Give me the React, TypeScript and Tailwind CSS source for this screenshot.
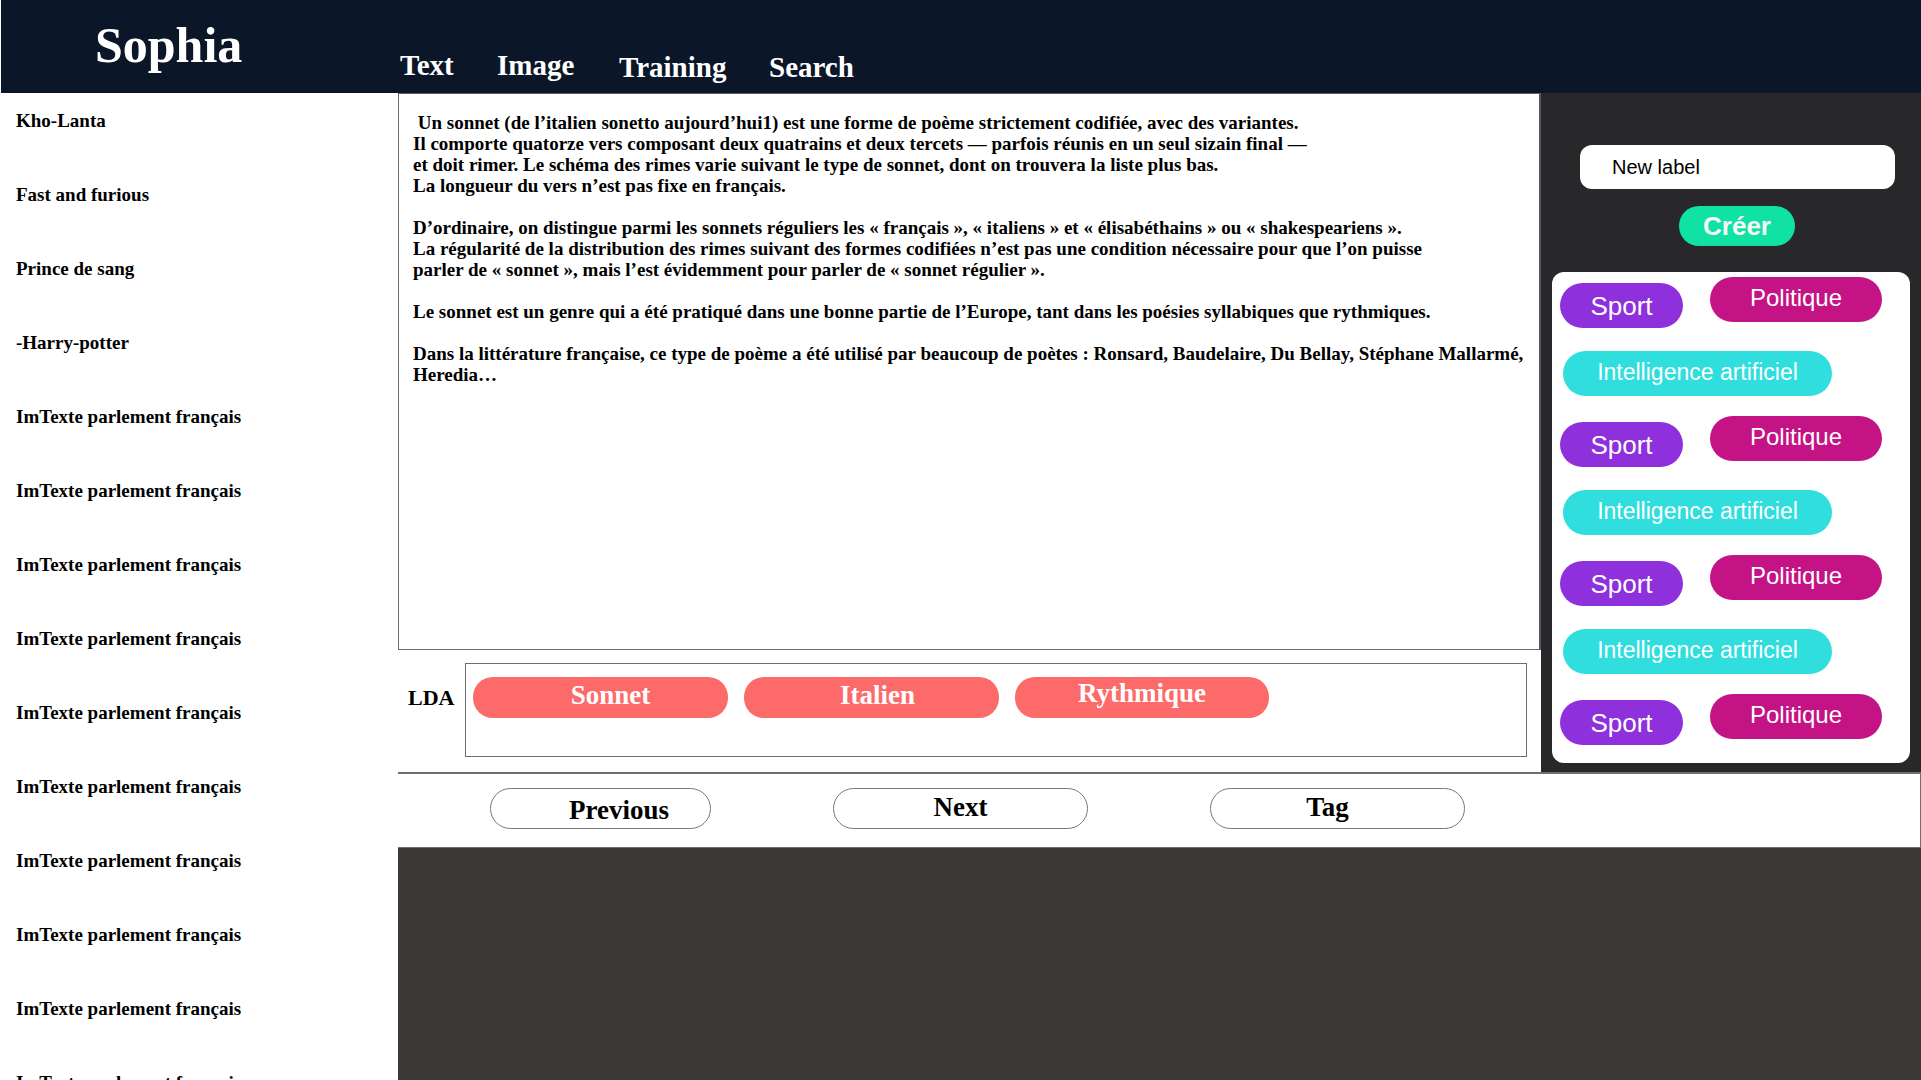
import React from "react";

const serif = "font-['Liberation_Serif',serif]";
const sans = "font-['Liberation_Sans',Arial,sans-serif]";

const sideItems = [
  "Kho-Lanta",
  "Fast and furious",
  "Prince de sang",
  "-Harry-potter",
  ...Array.from({ length: 10 }, () => "ImTexte parlement français"),
];

const paragraphs: string[][] = [
  [
    "\u00a0Un sonnet (de l’italien sonetto aujourd’hui1) est une forme de poème strictement codifiée, avec des variantes.",
    "Il comporte quatorze vers composant deux quatrains et deux tercets — parfois réunis en un seul sizain final —",
    "et doit rimer. Le schéma des rimes varie suivant le type de sonnet, dont on trouvera la liste plus bas.",
    "La longueur du vers n’est pas fixe en français.",
  ],
  [
    "D’ordinaire, on distingue parmi les sonnets réguliers les « français », « italiens » et « élisabéthains » ou « shakespeariens ».",
    "La régularité de la distribution des rimes suivant des formes codifiées n’est pas une condition nécessaire pour que l’on puisse",
    "parler de « sonnet », mais l’est évidemment pour parler de « sonnet régulier ».",
  ],
  [
    "Le sonnet est un genre qui a été pratiqué dans une bonne partie de l’Europe, tant dans les poésies syllabiques que rythmiques.",
  ],
  [
    "Dans la littérature française, ce type de poème a été utilisé par beaucoup de poètes : Ronsard, Baudelaire, Du Bellay, Stéphane Mallarmé,",
    "Heredia…",
  ],
];

function SportPolitiqueRow() {
  return (
    <div className="flex items-start">
      <div className={`ml-[8px] mt-[6px] flex h-[45px] w-[123px] items-center justify-center rounded-[23px] bg-[#8e30dc] text-[26px] leading-[30px] text-white ${sans}`}>
        Sport
      </div>
      <div className={`ml-[27px] flex h-[45px] w-[172px] items-center justify-center rounded-[23px] bg-[#c41384] pb-[4px] text-[24px] leading-[28px] text-white ${sans}`}>
        Politique
      </div>
    </div>
  );
}

function IAPill() {
  return (
    <div className={`ml-[11px] mt-[23px] flex h-[45px] w-[269px] items-center justify-center rounded-[23px] bg-[#30dede] pb-[2px] text-[23px] leading-[27px] text-white ${sans}`}>
      Intelligence artificiel
    </div>
  );
}

export default function App() {
  return (
    <div className="flex h-[1080px] w-[1921px] flex-col overflow-hidden bg-white">
      {/* Header */}
      <header className={`flex h-[93px] shrink-0 items-start border-l border-white bg-[#0b1628] text-white ${serif}`}>
        <div className="w-[399px] pl-[94px]">
          <div className="mt-[16px] text-[50px] font-bold leading-[58px]">Sophia</div>
        </div>
        <div className="mt-[49px] w-[97px] text-[29px] font-bold leading-[33px]">Text</div>
        <div className="mt-[49px] w-[122px] text-[29px] font-bold leading-[33px]">Image</div>
        <div className="mt-[51px] w-[150px] text-[29px] font-bold leading-[33px]">Training</div>
        <div className="mt-[51px] text-[29px] font-bold leading-[33px]">Search</div>
      </header>

      <div className="flex min-h-0 flex-1">
        {/* Sidebar */}
        <aside className={`w-[398px] shrink-0 bg-white pl-[16px] pt-[16px] text-black ${serif}`}>
          {sideItems.map((t, i) => (
            <div key={i} className="h-[74px] whitespace-nowrap text-[19px] font-bold leading-[24px]">
              {t}
            </div>
          ))}
        </aside>

        {/* Main */}
        <main className="flex min-w-0 flex-1 flex-col">
          <div className="flex h-[679px] shrink-0">
            {/* Left column */}
            <div className="flex w-[1143px] flex-col">
              <div className={`h-[557px] overflow-hidden border-t border-b border-l border-r-2 border-t-[#5f5f66] border-b-[#6b6b6b] border-l-[#6b6b6b] border-r-[#55555c] pl-[14px] pt-[18px] text-[19px] font-bold leading-[21px] text-black ${serif}`}>
                {paragraphs.map((p, i) => (
                  <div key={i} className={i > 0 ? "mt-[21px]" : ""}>
                    {p.map((line, j) => (
                      <div key={j} className="whitespace-nowrap">
                        {line}
                      </div>
                    ))}
                  </div>
                ))}
              </div>
              {/* LDA */}
              <div className={`flex h-[122px] items-start pl-[10px] pt-[13px] ${serif}`}>
                <div className="mt-[21px] w-[57px] text-[22px] font-bold leading-[28px] text-black">LDA</div>
                <div className="flex h-[94px] w-[1062px] items-start gap-[16px] border border-[#6e6e6e] pl-[7px] pt-[13px]">
                  <div className="h-[41px] w-[255px] rounded-[20px] bg-[#fd6a6a] pl-[20px] pt-[3px] text-center text-[27px] font-bold leading-[30px] text-white">
                    Sonnet
                  </div>
                  <div className="h-[41px] w-[255px] rounded-[20px] bg-[#fd6a6a] pl-[12px] pt-[3px] text-center text-[27px] font-bold leading-[30px] text-white">
                    Italien
                  </div>
                  <div className="h-[41px] w-[254px] rounded-[20px] bg-[#fd6a6a] pt-[1px] text-center text-[27px] font-bold leading-[30px] text-white">
                    Rythmique
                  </div>
                </div>
              </div>
            </div>

            {/* Right panel */}
            <div className="flex w-[380px] shrink-0 flex-col bg-[#28282a]">
              <div className={`ml-[39px] mt-[52px] flex h-[44px] w-[315px] items-center rounded-[12px] bg-white pl-[32px] text-[20px] leading-[23px] text-black ${sans}`}>
                New label
              </div>
              <div className={`ml-[138px] mt-[17px] flex h-[40px] w-[116px] items-center justify-center rounded-[20px] bg-[#10e2a4] text-[26px] font-bold leading-[30px] text-[#f7f7f7] ${sans}`}>
                Créer
              </div>
              <div className="ml-[11px] mt-[26px] flex w-[358px] flex-col rounded-[12px] bg-white pb-[18px] pt-[5px]">
                <SportPolitiqueRow />
                <IAPill />
                <div className="mt-[20px]">
                  <SportPolitiqueRow />
                </div>
                <IAPill />
                <div className="mt-[20px]">
                  <SportPolitiqueRow />
                </div>
                <IAPill />
                <div className="mt-[20px]">
                  <SportPolitiqueRow />
                </div>
              </div>
            </div>
          </div>

          {/* Button row */}
          <div className={`flex h-[76px] shrink-0 items-start border-t-2 border-r border-b border-[#6e6e6e] bg-white pt-[14px] ${serif}`}>
            <div className="ml-[92px] h-[41px] w-[221px] rounded-[21px] border border-[#777777] pl-[78px] pt-[6px] text-[27px] font-bold leading-[30px] text-black">
              Previous
            </div>
            <div className="ml-[122px] h-[41px] w-[255px] rounded-[21px] border border-[#777777] pt-[3px] text-center text-[27px] font-bold leading-[30px] text-black">
              Next
            </div>
            <div className="ml-[122px] h-[41px] w-[255px] rounded-[21px] border border-[#777777] pr-[20px] pt-[3px] text-center text-[27px] font-bold leading-[30px] text-black">
              Tag
            </div>
          </div>

          {/* Dark area */}
          <div className="flex-1 bg-[#3c3837]" />
        </main>
      </div>
    </div>
  );
}
